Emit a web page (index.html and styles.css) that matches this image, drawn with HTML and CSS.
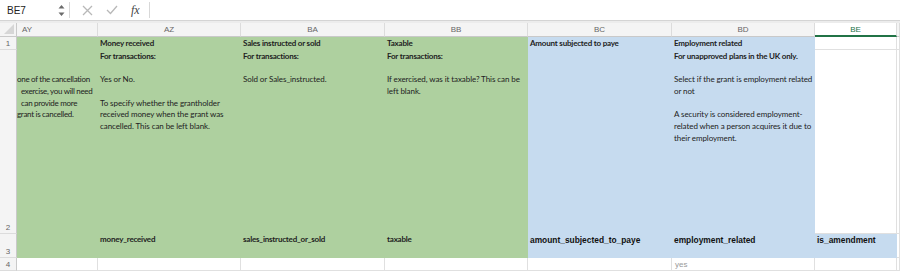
FILE: index.html
```html
<!DOCTYPE html>
<html lang="en">
  <head>
    <meta charset="UTF-8" />
    <title>Sheet</title>
    <link rel="stylesheet" href="styles.css">
  </head>
  <body>
    <div class="formula-bar">
      <div class="name-box">
        <span>BE7</span>
        <span class="spin">
          <svg width="7" height="13" viewBox="0 0 7 13"><path d="M0.5 4.5 L3.5 1 L6.5 4.5 Z M0.5 8.5 L3.5 12 L6.5 8.5 Z" fill="#6b6b6b"/></svg>
        </span>
      </div>
      <div class="fx-tools">
        <svg width="11" height="11" viewBox="0 0 11 11"><path d="M1 1 L10 10 M10 1 L1 10" stroke="#b8b8b8" stroke-width="1.3" fill="none"/></svg>
        <svg width="12" height="10" viewBox="0 0 12 10"><path d="M1 5 L4.5 8.5 L11 1" stroke="#b8b8b8" stroke-width="1.3" fill="none"/></svg>
        <span class="fx">fx</span>
      </div>
      <div class="formula-input"></div>
    </div>

    <div class="sheet">
      <!-- column headers -->
      <div class="corner"><span class="tri"></span></div>
      <div class="col-head first">AY</div>
      <div class="col-head">AZ</div>
      <div class="col-head">BA</div>
      <div class="col-head">BB</div>
      <div class="col-head">BC</div>
      <div class="col-head">BD</div>
      <div class="col-head selected">BE</div>
      <div class="col-head"></div>

      <!-- row 1 -->
      <div class="row-head">1</div>
      <div class="cell green"></div>
      <div class="cell green b">Money received</div>
      <div class="cell green b">Sales instructed or sold</div>
      <div class="cell green b">Taxable</div>
      <div class="cell blue b">Amount subjected to paye</div>
      <div class="cell blue b">Employment related</div>
      <div class="cell"></div>
      <div class="cell"></div>

      <!-- row 2 (wrapped text, one div per line) -->
      <div class="row-head bottom">2</div>
      <div class="cell green clip">
        <div class="ln"></div>
        <div class="ln"></div>
        <div class="ln">one of the cancellation</div>
        <div class="ln l2">exercise, you will need</div>
        <div class="ln l3">can provide more</div>
        <div class="ln">grant is cancelled.</div>
      </div>
      <div class="cell green">
        <div class="ln b">For transactions:</div>
        <div class="ln"></div>
        <div class="ln">Yes or No.</div>
        <div class="ln"></div>
        <div class="ln">To specify whether the grantholder</div>
        <div class="ln">received money when the grant was</div>
        <div class="ln">cancelled. This can be left blank.</div>
      </div>
      <div class="cell green">
        <div class="ln b">For transactions:</div>
        <div class="ln"></div>
        <div class="ln">Sold or Sales_instructed.</div>
      </div>
      <div class="cell green">
        <div class="ln b">For transactions:</div>
        <div class="ln"></div>
        <div class="ln">If exercised, was it taxable? This can be</div>
        <div class="ln">left blank.</div>
      </div>
      <div class="cell blue"></div>
      <div class="cell blue">
        <div class="ln b">For unapproved plans in the UK only.</div>
        <div class="ln"></div>
        <div class="ln">Select if the grant is employment related</div>
        <div class="ln">or not</div>
        <div class="ln"></div>
        <div class="ln">A security is considered employment-</div>
        <div class="ln">related when a person acquires it due to</div>
        <div class="ln">their employment.</div>
      </div>
      <div class="cell"></div>
      <div class="cell"></div>

      <!-- row 3 -->
      <div class="row-head bottom">3</div>
      <div class="cell green"></div>
      <div class="cell green b key">money_received</div>
      <div class="cell green b key">sales_instructed_or_sold</div>
      <div class="cell green b key">taxable</div>
      <div class="cell blue arial">amount_subjected_to_paye</div>
      <div class="cell blue arial">employment_related</div>
      <div class="cell blue arial">is_amendment</div>
      <div class="cell"></div>

      <!-- row 4 -->
      <div class="row-head">4</div>
      <div class="cell"></div>
      <div class="cell"></div>
      <div class="cell"></div>
      <div class="cell"></div>
      <div class="cell"></div>
      <div class="cell val">yes</div>
      <div class="cell"></div>
      <div class="cell"></div>
    </div>
  </body>
</html>
```

FILE: styles.css
```css
body {
  margin: 0;
  background: #fff;
  font-family: "Liberation Sans", Arial, sans-serif;
  overflow: hidden;
}

/* formula bar */
.formula-bar {
  display: flex;
  height: 20px;
  border-bottom: 1px solid #d4d4d4;
  margin-bottom: 2px;
  box-shadow: 0 2px 0 #ececec;
}
.name-box {
  width: 70px;
  display: flex;
  align-items: center;
  justify-content: space-between;
  padding: 0 4px 0 7px;
  box-sizing: border-box;
  border-right: 1px solid #d8d8d8;
  margin: 2px 0;
  font-size: 10px;
  color: #222;
}
.spin {
  display: flex;
  align-items: center;
}
.fx-tools {
  width: 80px;
  display: flex;
  align-items: center;
  gap: 13px;
  padding-left: 12px;
  box-sizing: border-box;
  border-right: 1px solid #d8d8d8;
  margin: 2px 0;
}
.fx {
  font-family: "Liberation Serif", "Times New Roman", serif;
  font-style: italic;
  font-size: 12px;
  color: #444;
}
.formula-input {
  flex: 1;
}

/* grid */
.sheet {
  display: grid;
  grid-template-columns: 17px 81px 143px 144px 143px 144px 143px 82px 1fr;
  grid-template-rows: 14px 13px 184px 24px 13px;
}
.corner {
  background: #f4f4f4;
  border-right: 1px solid #c9c9c9;
  border-bottom: 1px solid #c9c9c9;
  position: relative;
}
.tri {
  position: absolute;
  right: 2px;
  bottom: 2px;
  width: 0;
  height: 0;
  border-left: 10px solid transparent;
  border-bottom: 10px solid #d6d6d6;
}
.col-head {
  background: #f4f4f4;
  border-right: 1px solid #dcdcdc;
  border-bottom: 1px solid #c9c9c9;
  display: flex;
  align-items: center;
  justify-content: center;
  font-size: 8px;
  color: #666;
}
.col-head.first {
  justify-content: flex-start;
  padding-left: 5px;
}
.col-head.selected {
  background: #fff;
  color: #217346;
  border-bottom: 2px solid #217346;
}
.row-head {
  background: #f4f4f4;
  border-right: 1px solid #c9c9c9;
  border-bottom: 1px solid #dcdcdc;
  display: flex;
  align-items: center;
  justify-content: center;
  font-size: 8px;
  color: #666;
}
.row-head.bottom {
  align-items: flex-end;
  padding-bottom: 1px;
}

.cell {
  border-right: 1px solid #e0e0e0;
  border-bottom: 1px solid #e0e0e0;
  padding: 1px 0 0 2px;
  font-family: Lato, "Open Sans", sans-serif;
  font-size: 8px;
  line-height: 11.7px;
  letter-spacing: -0.08px;
  color: #222;
  overflow: hidden;
  min-width: 0;
}
.green {
  background: #aed09f;
  border-color: #aed09f;
}
.blue {
  background: #c6dbef;
  border-color: #c6dbef;
}
.b {
  font-weight: bold;
  letter-spacing: -0.2px;
}
.ln {
  white-space: nowrap;
  height: 11.7px;
}
.key {
  padding-top: 0;
}
.arial {
  font-family: "Liberation Sans", Arial, sans-serif;
  font-weight: bold;
  font-size: 8.4px;
  letter-spacing: 0;
  padding-top: 1px;
  color: #111;
}
.val {
  font-family: "Liberation Sans", Arial, sans-serif;
  font-size: 8px;
  line-height: 11px;
  letter-spacing: 0;
  color: #999;
  padding-left: 3px;
}

/* text cut off on the left edge of the view */
.clip {
  padding: 1px 0 0;
}
.clip .ln {
  letter-spacing: -0.3px;
}
.l2 { margin-left: 4px; }
.l3 { margin-left: 4px; }
```
